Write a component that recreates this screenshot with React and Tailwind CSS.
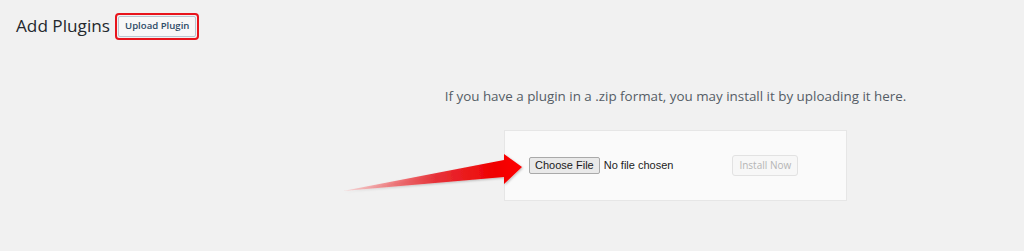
export default function App() {
  return (
    <div className="w-[1024px] h-[251px] bg-[#f1f1f1] relative overflow-hidden" style={{ fontFamily: '"Open Sans", "Noto Sans", sans-serif' }}>
      <div className="flex items-center pt-[12px] pl-[16px]">
        <h1 className="text-[17.2px] leading-[28px] text-[#23282d] font-normal">Add Plugins</h1>
        <div className="ml-[5px] rounded-[4px] border-2 border-[#e8141c] p-[1px]">
          <div className="h-[21px] px-[6px] flex items-center rounded-[2px] border border-[#b9c6d2] bg-[#f7f7f7] text-[9.6px] font-semibold text-[#2d4a66]">
            Upload Plugin
          </div>
        </div>
      </div>
      <div className="pl-[327px] flex flex-col items-center">
        <p className="mt-[46px] text-[13.4px] leading-[20px] text-[#555d66]">
          If you have a plugin in a .zip format, you may install it by uploading it here.
        </p>
        <div className="mt-[24px] w-[343px] h-[71px] bg-[#fafafa] border border-[#e6e6e6] flex items-center pl-[24px]" style={{ fontFamily: '"Liberation Sans", Arial, sans-serif' }}>
          <div className="h-[17px] px-[5px] flex items-center border border-[#a9a9a9] rounded-[2px] bg-[#e9e9e9] text-[11px] text-[#1a1a1a]">Choose File</div>
          <span className="ml-[4px] text-[11px] text-[#222]">No file chosen</span>
          <div className="ml-[59px] h-[21px] px-[6px] flex items-center border border-[#e2e2e2] rounded-[3px] bg-[#f7f7f7] text-[10px] text-[#b5b5b5]" style={{ fontFamily: '"Open Sans", sans-serif' }}>Install Now</div>
        </div>
      </div>
      <svg className="absolute left-0 top-0" width="1024" height="251" viewBox="0 0 1024 251">
        <defs>
          <linearGradient id="ag" x1="343" y1="190" x2="522" y2="167" gradientUnits="userSpaceOnUse">
            <stop offset="0" stopColor="#ff4040" stopOpacity="0.15" />
            <stop offset="0.5" stopColor="#e81c24" stopOpacity="0.85" />
            <stop offset="0.85" stopColor="#f00000" />
            <stop offset="1" stopColor="#ff0000" />
          </linearGradient>
          <filter id="sh" x="-10%" y="-30%" width="120%" height="160%">
            <feDropShadow dx="1" dy="1" stdDeviation="1.2" floodColor="#000" floodOpacity="0.25" />
          </filter>
        </defs>
        <polygon points="343,191 504,160 504,154 522,167 504,184 504,177" fill="url(#ag)" filter="url(#sh)" />
      </svg>
    </div>
  );
}
